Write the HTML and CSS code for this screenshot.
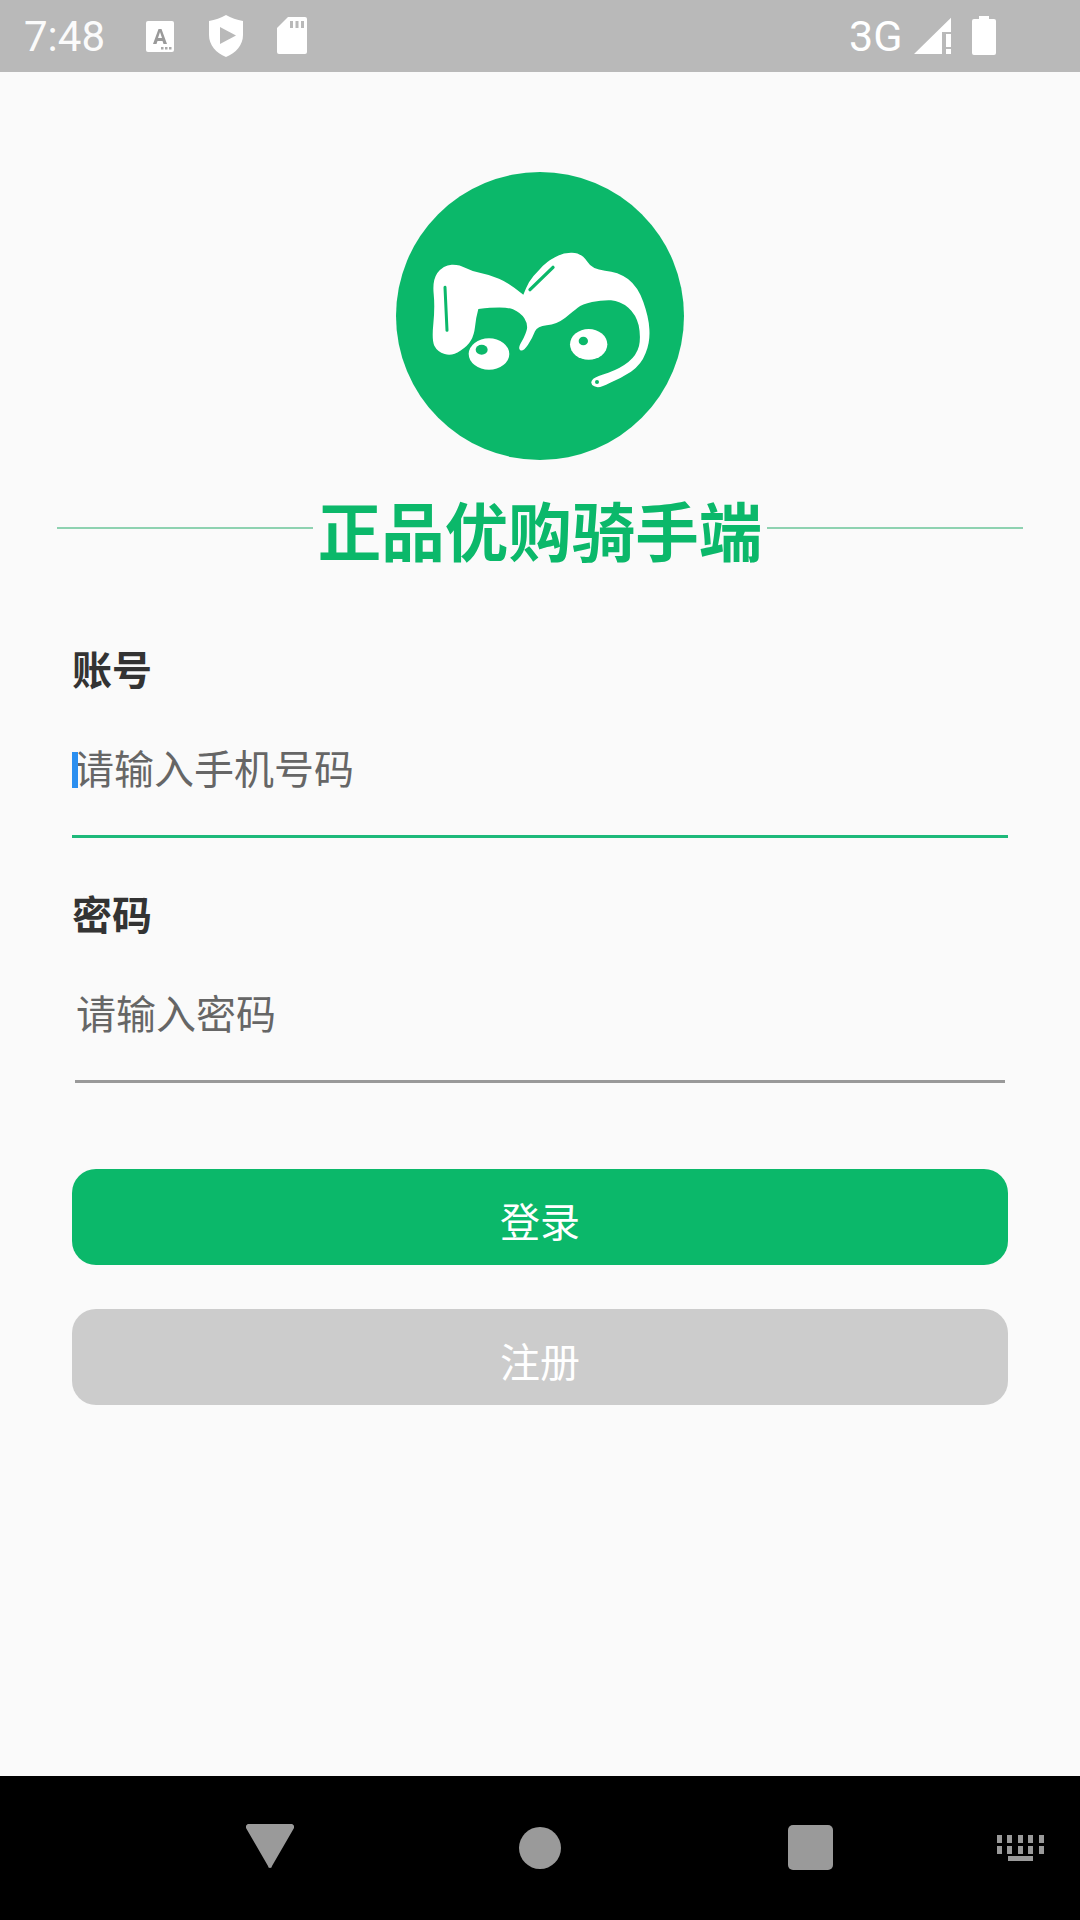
FILE: index.html
```html
<!DOCTYPE html>
<html lang="zh-CN">
<head>
<meta charset="utf-8">
<title>正品优购骑手端</title>
<link rel="stylesheet" href="styles.css">
</head>
<body>
<div class="phone">
  <header class="status">
    <span class="time">7:48</span>
    <svg class="ic ic-a" viewBox="0 0 28 31"><path d="M2 0h24a2 2 0 0 1 2 2v27a2 2 0 0 1-2 2H2a2 2 0 0 1-2-2V2a2 2 0 0 1 2-2z" fill="#fff"/><path d="M7 23 12.500 8h3L21 23h-3.500l-1-3h-5l-1 3zM12 17h4l-2-6z" fill="#9a9a9a" fill-rule="evenodd"/><g fill="#aaa"><rect x="15" y="26" width="2.500" height="2.500"/><rect x="19" y="26" width="2.500" height="2.500"/><rect x="23" y="26" width="2.500" height="2.500"/></g></svg>
    <svg class="ic ic-shield" viewBox="0 0 34 42"><path d="M17 0C22 3 28 5 34 6v14c0 10-7 18-17 22C7 38 0 30 0 20V6C6 5 12 3 17 0z" fill="#fff"/><path d="M11 12 27 20.500 11 29z" fill="#b9b9b9"/></svg>
    <svg class="ic ic-sd" viewBox="0 0 30 37"><path d="M11 0h17a2 2 0 0 1 2 2v33a2 2 0 0 1-2 2H2a2 2 0 0 1-2-2V11z" fill="#fff"/><g fill="#b9b9b9"><rect x="13" y="4" width="3" height="7"/><rect x="18.500" y="4" width="3" height="7"/><rect x="24" y="4" width="3" height="7"/></g></svg>
    <span class="net">3G</span>
    <svg class="ic ic-signal" viewBox="0 0 38 37"><path d="M0 37 37 0.700V15H28V37z" fill="#fff"/><rect x="32" y="17" width="5" height="13" fill="#fff"/><rect x="32" y="32" width="5" height="5" fill="#fff"/></svg>
    <svg class="ic ic-batt" viewBox="0 0 24 39"><path d="M7 0h10v3h5a2 2 0 0 1 2 2v32a2 2 0 0 1-2 2H2a2 2 0 0 1-2-2V5a2 2 0 0 1 2-2h5z" fill="#fff"/></svg>
  </header>

  <main class="login">
    <svg class="logo" viewBox="48 35 864 864" aria-label="logo">
      <circle cx="480" cy="467" r="432" fill="#0bb86a"/>
      <path fill="#fff" d="M172 338Q190 314 215 313Q238 312 257 323Q276 333 302 338Q328 343 357 355Q388 368 430 403Q437 385 447 366Q458 347 478 328Q499 304 525 291Q549 276 576 277Q604 277 621 303Q636 328 675 331Q714 334 744 356Q774 379 790 425Q806 470 808 505Q811 545 797 578Q784 613 753 634Q722 654 689 668Q657 686 643 678Q626 668 640 655Q650 647 685 637Q720 625 745 605Q770 585 777 557Q783 530 776 495Q768 462 745 442Q720 422 693 420Q666 419 636 425Q606 432 593 442Q580 452 556 472Q530 492 500 495Q472 498 465 513Q458 532 444 553Q430 574 421 570Q412 565 426 542Q438 520 441 505Q443 490 433 474Q423 458 399 447Q375 437 295 446Q287 475 285 500Q282 525 273 540Q263 558 241 571Q217 588 194 581Q172 574 163 556Q155 540 160 490Q165 440 161 400Q157 360 172 338Z"/>
      <path d="M195 381 201 510" stroke="#0bb86a" stroke-width="9" stroke-linecap="round" fill="none"/>
      <path d="M450 388 519 321" stroke="#0bb86a" stroke-width="10" stroke-linecap="round" fill="none"/>
      <ellipse cx="327" cy="581" rx="61" ry="47" fill="#fff"/>
      <ellipse cx="305" cy="568" rx="18" ry="15" fill="#0bb86a"/>
      <ellipse cx="626" cy="552" rx="56" ry="46" fill="#fff"/>
      <ellipse cx="610" cy="542" rx="14" ry="13" fill="#0bb86a"/>
      <circle cx="651" cy="665" r="6" fill="#0bb86a"/>
    </svg>

    <div class="brand">
      <span class="rule"></span>
      <h1 class="brand-name">正品优购骑手端</h1>
      <span class="rule"></span>
    </div>

    <form class="form">
      <div class="label">账号</div>
      <div class="field field-active">
        <span class="caret"></span>
        <span class="hint">请输入手机号码</span>
      </div>
      <div class="label label-pass">密码</div>
      <div class="field field-idle">
        <span class="hint">请输入密码</span>
      </div>
      <div class="btn btn-primary">登录</div>
      <div class="btn btn-muted">注册</div>
    </form>
  </main>

  <nav class="nav">
    <svg class="nv nv-back" viewBox="0 0 48 44"><path d="M3 0h42a3 3 0 0 1 3 4L26 42a2 2 0 0 1-4 0L0 4a3 3 0 0 1 3-4z" fill="#9a9a9a"/></svg>
    <span class="nv nv-home"></span>
    <span class="nv nv-recent"></span>
    <svg class="nv nv-kbd" viewBox="0 0 47 26"><g fill="#9a9a9a"><rect x="0" y="0" width="5" height="8"/><rect x="10" y="0" width="5" height="8"/><rect x="21" y="0" width="5" height="8"/><rect x="31" y="0" width="5" height="8"/><rect x="42" y="0" width="5" height="8"/><rect x="0" y="11" width="5" height="8"/><rect x="10" y="11" width="5" height="8"/><rect x="21" y="11" width="5" height="8"/><rect x="31" y="11" width="5" height="8"/><rect x="42" y="11" width="5" height="8"/><rect x="11" y="21" width="25" height="5"/></g></svg>
  </nav>
</div>
</body>
</html>
```

FILE: styles.css
```css
* { box-sizing: border-box; }
html, body { margin: 0; padding: 0; }
body { font-family: "Noto Sans CJK SC", "Noto Sans", sans-serif; background: #fafafa; }
.phone { width: 1080px; height: 1920px; display: flex; flex-direction: column; overflow: hidden; }

.status { height: 72px; flex: none; background: #b9b9b9; display: flex; align-items: center; color: #fff; font-family: Roboto, sans-serif; font-size: 42px; padding-left: 24px; }
.time { width: 122px; flex: none; opacity: .95; }
.net { margin-left: 542px; width: 65px; flex: none; font-size: 43px; }
.ic { flex: none; display: block; }
.ic-a { width: 28px; height: 31px; margin-top: 1px; }
.ic-shield { width: 34px; height: 42px; margin-left: 35px; }
.ic-sd { width: 30px; height: 37px; margin-left: 34px; margin-top: -1px; }
.ic-signal { width: 38px; height: 37px; margin-top: -1px; }
.ic-batt { width: 24px; height: 39px; margin-left: 20px; margin-top: -1px; }

.login { flex: 1; display: flex; flex-direction: column; align-items: center; padding-top: 100px; }
.logo { width: 288px; height: 288px; display: block; flex: none; }

.brand { width: 966px; display: flex; align-items: center; margin-top: 23px; height: 90px; }
.rule { flex: 1; height: 2px; background: #8ed2b1; }
.brand-name { margin: 0 5px; font-size: 63.5px; line-height: 90px; font-weight: 700; color: #0bb86a; white-space: nowrap; }

.form { width: 936px; display: flex; flex-direction: column; margin-top: 67px; }
.label { font-size: 40px; line-height: 56px; font-weight: 700; color: #333; margin-bottom: 22px; }
.label-pass { margin-top: 47px; }
.field { position: relative; height: 120px; display: flex; align-items: center; padding: 0 0 20px 2px; }
.field-active { border-bottom: 3px solid #1eb97a; }
.field-idle { margin: 0 3px; padding-left: 1px; border-bottom: 3px solid #999; }
.hint { font-size: 40px; line-height: 56px; color: #666; }
.caret { position: absolute; left: 0; top: 34px; width: 6px; height: 36px; background: #2b8ff0; }

.btn { height: 96px; border-radius: 24px; display: flex; align-items: center; justify-content: center; font-size: 40px; color: #fff; padding-top: 5px; }
.btn-primary { background: #0bb86a; margin-top: 86px; }
.btn-muted { background: #ccc; margin-top: 44px; }

.nav { height: 144px; flex: none; background: #000; display: flex; align-items: center; padding-left: 246px; }
.nv { display: block; flex: none; }
.nv-back { width: 48px; height: 44px; margin-top: -4px; }
.nv-home { width: 42px; height: 42px; border-radius: 50%; background: #9a9a9a; margin-left: 225px; }
.nv-recent { width: 45px; height: 45px; border-radius: 5px; background: #9a9a9a; margin-left: 227px; margin-top: -1px; }
.nv-kbd { width: 47px; height: 26px; margin-left: 164px; }
```
